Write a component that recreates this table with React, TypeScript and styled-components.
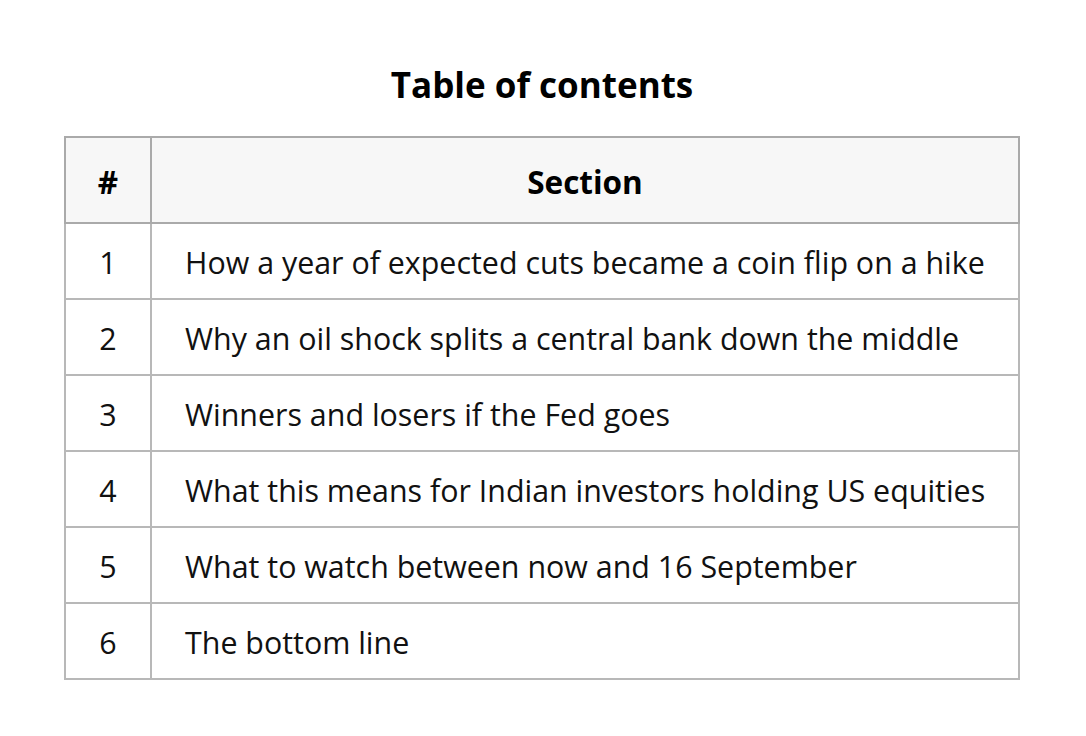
import React from "react";
import styled, { createGlobalStyle } from "styled-components";

const Global = createGlobalStyle`
  html, body { margin: 0; padding: 0; background: #ffffff; }
  body { font-family: "Open Sans", "Noto Sans", sans-serif; color: #111; }
`;

const Page = styled.main`
  display: flex;
  flex-direction: column;
  align-items: center;
  padding: 61px 66px 0 64px;
`;

const Title = styled.h2`
  margin: 0 0 27px;
  font-size: 35px;
  font-weight: 700;
  line-height: 48px;
  color: #000;
`;

const Table = styled.table`
  width: 956px;
  border-collapse: collapse;
  border: 2px solid #b3b3b3;
`;

const HeadCell = styled.th`
  background: #f7f7f7;
  border: 2px solid #aaaaaa;
  height: 82px;
  padding: 2px 0 0;
  font-size: 31.5px;
  font-weight: 700;
  text-align: center;
  color: #000;
`;

const NumCell = styled.td`
  width: 84px;
  border: 2px solid #b8b8b8;
  height: 71px;
  padding: 3px 0 0;
  text-align: center;
  font-size: 30.4px;
  color: #111;
`;

const TextCell = styled.td`
  border: 2px solid #b8b8b8;
  height: 71px;
  padding: 3px 0 0 33px;
  text-align: left;
  font-size: 30.4px;
  color: #111;
`;

const rows = [
  "How a year of expected cuts became a coin flip on a hike",
  "Why an oil shock splits a central bank down the middle",
  "Winners and losers if the Fed goes",
  "What this means for Indian investors holding US equities",
  "What to watch between now and 16 September",
  "The bottom line",
];

export default function App() {
  return (
    <>
      <Global />
      <Page>
        <Title>Table of contents</Title>
        <Table>
          <thead>
            <tr>
              <HeadCell>#</HeadCell>
              <HeadCell>Section</HeadCell>
            </tr>
          </thead>
          <tbody>
            {rows.map((r, i) => (
              <tr key={i}>
                <NumCell>{i + 1}</NumCell>
                <TextCell>{r}</TextCell>
              </tr>
            ))}
          </tbody>
        </Table>
      </Page>
    </>
  );
}
